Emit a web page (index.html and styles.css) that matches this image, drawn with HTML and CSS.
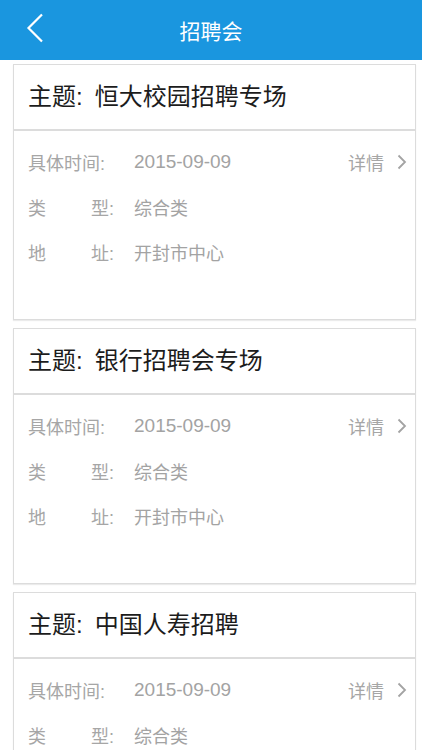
FILE: index.html
```html
<!DOCTYPE html>
<html lang="zh-CN">
<head>
    <meta charset="UTF-8">
    <title>招聘会</title>
    <link rel="stylesheet" href="styles.css">
</head>
<body>
    <div class="header">
        <a class="back" href="#">
            <svg width="18" height="30" viewBox="0 0 18 30">
                <path d="M16 1.5 L2.5 15 L16 28.5" fill="none" stroke="#fff" stroke-width="2.2"/>
            </svg>
        </a>
        <h1>招聘会</h1>
    </div>

    <div class="list">
        <div class="card">
            <div class="card-title">主题:<span class="topic">恒大校园招聘专场</span></div>
            <div class="card-body">
                <div class="row">
                    <span class="label">具体时间:</span>
                    <span class="value num">2015-09-09</span>
                    <a class="more" href="#">详情
                        <svg width="10" height="16" viewBox="0 0 10 16"><path d="M1.5 1.5 L8 8 L1.5 14.5" fill="none" stroke="#a3a3a3" stroke-width="1.8"/></svg>
                    </a>
                </div>
                <div class="row">
                    <span class="label split"><span>类</span><span>型:</span></span>
                    <span class="value">综合类</span>
                </div>
                <div class="row">
                    <span class="label split"><span>地</span><span>址:</span></span>
                    <span class="value">开封市中心</span>
                </div>
            </div>
        </div>

        <div class="card">
            <div class="card-title">主题:<span class="topic">银行招聘会专场</span></div>
            <div class="card-body">
                <div class="row">
                    <span class="label">具体时间:</span>
                    <span class="value num">2015-09-09</span>
                    <a class="more" href="#">详情
                        <svg width="10" height="16" viewBox="0 0 10 16"><path d="M1.5 1.5 L8 8 L1.5 14.5" fill="none" stroke="#a3a3a3" stroke-width="1.8"/></svg>
                    </a>
                </div>
                <div class="row">
                    <span class="label split"><span>类</span><span>型:</span></span>
                    <span class="value">综合类</span>
                </div>
                <div class="row">
                    <span class="label split"><span>地</span><span>址:</span></span>
                    <span class="value">开封市中心</span>
                </div>
            </div>
        </div>

        <div class="card">
            <div class="card-title">主题:<span class="topic">中国人寿招聘</span></div>
            <div class="card-body">
                <div class="row">
                    <span class="label">具体时间:</span>
                    <span class="value num">2015-09-09</span>
                    <a class="more" href="#">详情
                        <svg width="10" height="16" viewBox="0 0 10 16"><path d="M1.5 1.5 L8 8 L1.5 14.5" fill="none" stroke="#a3a3a3" stroke-width="1.8"/></svg>
                    </a>
                </div>
                <div class="row">
                    <span class="label split"><span>类</span><span>型:</span></span>
                    <span class="value">综合类</span>
                </div>
                <div class="row">
                    <span class="label split"><span>地</span><span>址:</span></span>
                    <span class="value">开封市中心</span>
                </div>
            </div>
        </div>
    </div>
</body>
</html>
```

FILE: styles.css
```css
body {
    margin: 0;
    padding: 0;
    background: #fff;
    font-family: "Liberation Sans", "Noto Sans CJK SC", sans-serif;
}
.header {
    height: 60px;
    background: #1a96df;
    display: flex;
    align-items: center;
    justify-content: center;
    position: relative;
}
.header h1 {
    margin: 0;
    color: #fff;
    font-size: 21px;
    font-weight: normal;
}
.back {
    position: absolute;
    left: 26px;
    top: 13px;
    display: block;
    height: 30px;
}
.list {
    padding: 4px 6px 0 13px;
}
.card {
    border: 1px solid #dcdcdc;
    box-shadow: 0 1px 1px rgba(0, 0, 0, 0.08);
    margin-bottom: 8px;
    background: #fff;
}
.card-title {
    height: 64px;
    line-height: 64px;
    padding-left: 14px;
    font-size: 24px;
    color: #1c1c1c;
    border-bottom: 2px solid #dcdcdc;
}
.topic {
    margin-left: 12px;
}
.card-body {
    padding: 8px 8px 45px 14px;
}
.row {
    display: flex;
    align-items: center;
    height: 45px;
    font-size: 18px;
    color: #a6a6a6;
}
.label {
    width: 106px;
    flex-shrink: 0;
}
.label.split {
    display: flex;
    justify-content: space-between;
    width: 86px;
    margin-right: 20px;
}
.value {
    flex: 1;
    color: #a3a3a3;
}
.value.num {
    font-size: 19px;
}
.more {
    display: flex;
    align-items: center;
    gap: 13px;
    color: #a6a6a6;
    text-decoration: none;
}
```
